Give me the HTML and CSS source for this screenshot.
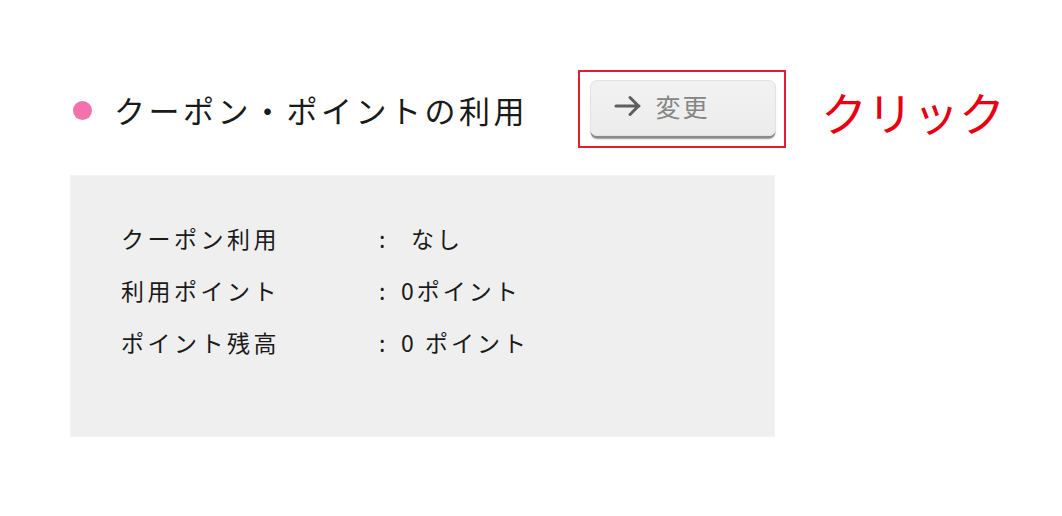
FILE: index.html
```html
<!DOCTYPE html>
<html lang="ja">
<head>
<meta charset="utf-8">
<link rel="stylesheet" href="styles.css">
</head>
<body>
<div class="page">
  <div class="head">
    <span class="dot"></span>
    <h2 class="title">クーポン・ポイントの利用</h2>
    <div class="highlight">
      <button class="btn" type="button">
        <svg class="arrow" width="28" height="24" viewBox="0 0 28 24"><path d="M2 12H25M16 3.5l8.5 8.5-8.5 8.5" fill="none" stroke="#5e5e5e" stroke-width="3" stroke-linecap="round" stroke-linejoin="round"/></svg>
        <span class="btn-label">変更</span>
      </button>
    </div>
    <span class="click">クリック</span>
  </div>
  <div class="panel">
    <div class="row"><span class="label">クーポン利用</span><span class="colon">:</span><span class="value indent">なし</span></div>
    <div class="row"><span class="label">利用ポイント</span><span class="colon">:</span><span class="value">0ポイント</span></div>
    <div class="row"><span class="label">ポイント残高</span><span class="colon">:</span><span class="value">0 ポイント</span></div>
  </div>
</div>
</body>
</html>
```

FILE: styles.css
```css
html, body {
  margin: 0;
  padding: 0;
  background: #ffffff;
}
body {
  font-family: "Noto Sans CJK JP", "Noto Sans", sans-serif;
  color: #222222;
}
.page {
  padding: 70px 0 0 70px;
}
.head {
  display: flex;
  align-items: center;
  height: 78px;
}
.dot {
  width: 19px;
  height: 19px;
  border-radius: 50%;
  background: #f172ad;
  margin-left: 3px;
  margin-top: 2px;
}
.title {
  margin: 0 0 0 22px;
  font-size: 31px;
  font-weight: 400;
  letter-spacing: 3.5px;
  line-height: 1;
  color: #1a1a1a;
}
.highlight {
  margin-left: 50px;
  box-sizing: border-box;
  width: 208px;
  height: 78px;
  border: 2.5px solid #e31d2c;
  padding: 7.5px 7px 0 9.5px;
}
.btn {
  box-sizing: border-box;
  width: 186px;
  height: 56px;
  display: flex;
  align-items: center;
  padding: 0 0 3px 23px;
  gap: 14px;
  background: linear-gradient(#f2f2f2, #ececec);
  border: 1px solid #e2e2e2;
  border-radius: 7px;
  box-shadow: 0 3px 0 -0.5px #8a8a8a, 0 4px 2px -1px #b5b5b5;
  font-family: inherit;
  cursor: pointer;
}
.arrow {
  display: block;
}
.btn-label {
  font-size: 25px;
  letter-spacing: 2px;
  color: #858585;
  line-height: 1;
}
.click {
  margin-left: 35px;
  font-size: 46px;
  color: #e60012;
  line-height: 1;
  margin-top: 4px;
}
.panel {
  margin-top: 27px;
  width: 705px;
  height: 262px;
  box-sizing: border-box;
  background: #efefef;
  border: 1px solid #f3f3f3;
  padding: 36px 0 0 50px;
}
.row {
  display: grid;
  grid-template-columns: 258px 22px auto;
  height: 52px;
  align-items: center;
  font-size: 23px;
  letter-spacing: 3.5px;
  color: #1a1a1a;
}
.colon {
  letter-spacing: 0;
}
.value {
  white-space: pre;
  letter-spacing: 3px;
}
.indent {
  padding-left: 10px;
}
```
